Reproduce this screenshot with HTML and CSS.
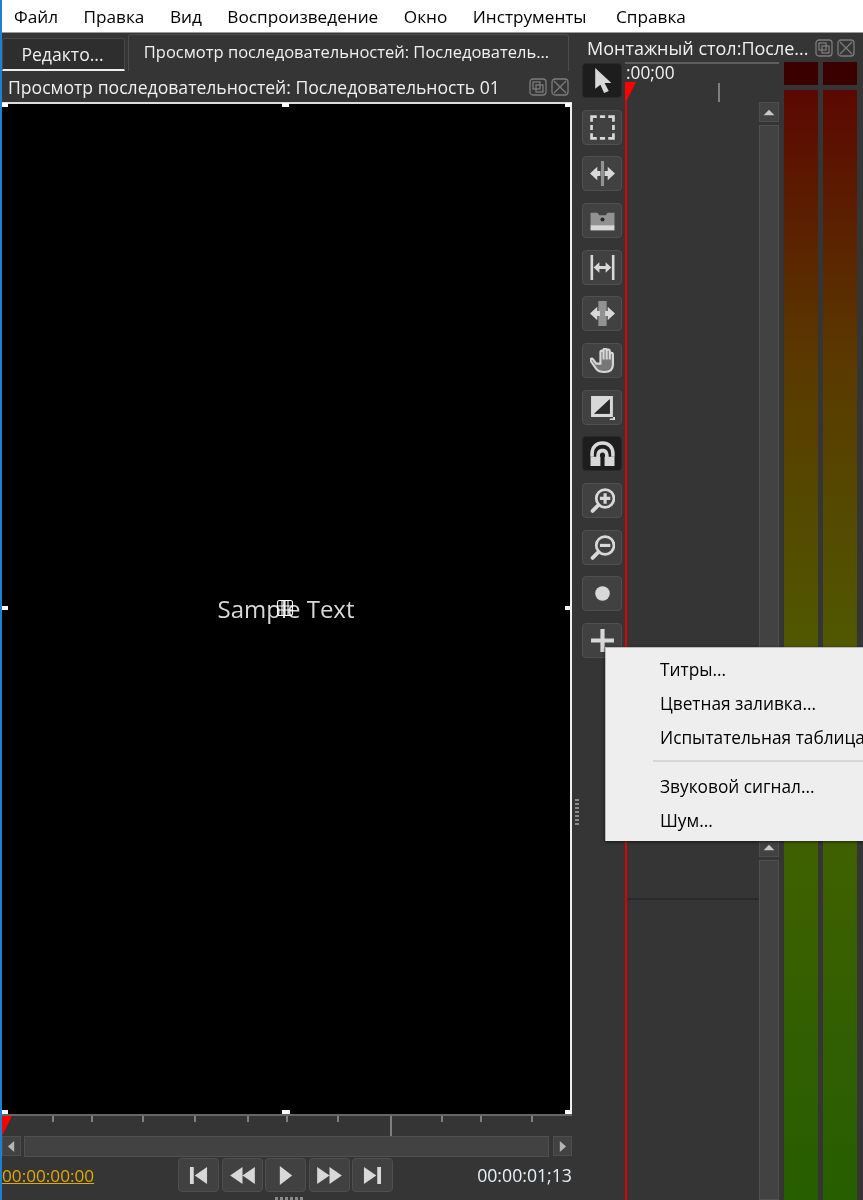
FILE: index.html
```html
<!DOCTYPE html>
<html>
	<head>
		<title>Olive</title>
		<link rel="stylesheet" href="styles.css">
	</head>
	<body>
		<div class="app">
			<div class="menubar">
				<span>Файл</span>
				<span>Правка</span>
				<span>Вид</span>
				<span>Воспроизведение</span>
				<span>Окно</span>
				<span>Инструменты</span>
				<span>Справка</span>
			</div>
			<div class="workspace">
				<div class="left">
					<div class="tabs">
						<div class="tab">Редакто...</div>
						<div class="tab active">Просмотр последовательностей: Последователь...</div>
					</div>
					<div class="panel-title">
						<span class="title-text">Просмотр последовательностей: Последовательность 01</span>
						<svg class="dock" viewBox="0 0 18 18"><rect x="1" y="1" width="16" height="16" rx="3"/><rect x="4" y="4" width="7" height="7"/><rect x="7" y="7" width="7" height="7"/></svg>
						<svg class="dock" viewBox="0 0 18 18"><rect x="1" y="1" width="16" height="16" rx="3"/><path d="M3 3 15 15M15 3 3 15"/></svg>
					</div>
					<div class="viewer">
						<i class="handle h-tl"></i><i class="handle h-tc"></i><i class="handle h-tr"></i>
						<i class="handle h-ml"></i><i class="handle h-mr"></i>
						<i class="handle h-bl"></i><i class="handle h-bc"></i><i class="handle h-br"></i>
						<span class="sample">Sample Text</span>
						<svg class="anchor" viewBox="0 0 18 18"><rect x="1.5" y="1.5" width="15" height="15" rx="2"/><path d="M9 1V17M1 7H17M1 11H17M6 1V17M12 1V17"/></svg>
					</div>
					<div class="ruler">
						<svg class="ruler-ticks" viewBox="0 0 570 20">
							<path class="tick" d="M51 0V6M90 0V6M141 0V6M193 0V6M246 0V6M285 0V6M336 0V6M440 0V6M479 0V6M530 0V6"/>
							<path class="tick big" d="M389 0V20"/>
							<path class="playhead" d="M0 0H10L0 20Z"/>
						</svg>
					</div>
					<div class="hscroll">
						<div class="arrow-btn"><svg viewBox="0 0 10 14"><path d="M8 1V13L1 7Z"/></svg></div>
						<div class="hscroll-track"></div>
						<div class="arrow-btn"><svg viewBox="0 0 10 14"><path d="M2 1V13L9 7Z"/></svg></div>
					</div>
					<div class="controls">
						<span class="time current">00:00:00:00</span>
						<div class="transport">
							<button class="btn"><svg viewBox="0 0 24 20"><path d="M3 1H7V19H3ZM21 1V19L8 10Z"/></svg></button>
							<button class="btn"><svg viewBox="0 0 26 20"><path d="M13 1V19L0 10ZM26 1V19L13 10Z"/></svg></button>
							<button class="btn"><svg viewBox="0 0 24 20"><path d="M6 0V20L19 10Z"/></svg></button>
							<button class="btn"><svg viewBox="0 0 26 20"><path d="M0 1V19L13 10ZM13 1V19L26 10Z"/></svg></button>
							<button class="btn"><svg viewBox="0 0 24 20"><path d="M3 1V19L16 10ZM17 1H21V19H17Z"/></svg></button>
						</div>
						<span class="time">00:00:01;13</span>
					</div>
				</div>
				<div class="right">
					<div class="dock-title">
						<span class="title-text">Монтажный стол:После...</span>
						<svg class="dock" viewBox="0 0 18 18"><rect x="1" y="1" width="16" height="16" rx="3"/><rect x="4" y="4" width="7" height="7"/><rect x="7" y="7" width="7" height="7"/></svg>
						<svg class="dock" viewBox="0 0 18 18"><rect x="1" y="1" width="16" height="16" rx="3"/><path d="M3 3 15 15M15 3 3 15"/></svg>
					</div>
					<div class="dock-body">
						<div class="tools">
							<button class="btn selected"><svg viewBox="0 0 24 24"><path d="M5 0V20L10 16 13.500 24 18 22 14 14.500H20.500Z"/></svg></button>
							<button class="btn"><svg viewBox="0 0 24 24"><path class="line marquee" d="M1.500 6.500V1.500H6.500M9.500 1.500H14.500M17.500 1.500H22.500V6.500M22.500 9.500V14.500M22.500 17.500V22.500H17.500M14.500 22.500H9.500M6.500 22.500H1.500V17.500M1.500 14.500V9.500"/></svg></button>
							<button class="btn"><svg viewBox="0 0 24 24"><path class="dim" d="M10.500 0H13.500V24H10.500Z"/><path d="M0 12 7 5.500V9.500H10V14.500H7V18.500ZM24 12 17 5.500V9.500H14V14.500H17V18.500Z"/></svg></button>
							<button class="btn"><svg viewBox="0 0 24 24"><path class="dim" d="M0.500 4.500H7L9 7H15L17 4.500H23.500V16.500H0.500Z"/><circle class="solid-dark" cx="12" cy="11" r="2"/><path d="M0.500 16.500H23.500V21.500H0.500Z"/></svg></button>
							<button class="btn"><svg viewBox="0 0 24 24"><path d="M0.500 0H3V24H0.500ZM21 0H23.500V24H21ZM9 7V10.500H15V7L20.500 12 15 17V13.500H9V17L3.500 12Z"/></svg></button>
							<button class="btn"><svg viewBox="0 0 24 24"><path class="dim" d="M8 0H16V24H8Z"/><path d="M0 12 7 5.500V9.500H9.500V14.500H7V18.500ZM24 12 17 5.500V9.500H14.500V14.500H17V18.500Z"/></svg></button>
							<button class="btn"><svg viewBox="0 0 24 24"><path class="line hand" d="M6 15 3 11C1 9 0 11 1 13L6 20C8 23 11 23 14 23 19 23 22 21 22 16V6C22 4 19 4 19 6V11 3C19 1 16 1 16 3V11 2C16 0 13 0 13 2V11 4C13 2 10 2 10 4V15Z"/></svg></button>
							<button class="btn"><svg viewBox="0 0 24 24"><path d="M1 1H22V21H1ZM4 18H19V4Z"/><path class="solid-dark" d="M4 18H19V4Z"/><path d="M22 21H24V24H19V22.500H22Z"/></svg></button>
							<button class="btn selected"><svg viewBox="0 0 24 24"><path class="line magnet" d="M2 15V12C2 5.500 6.500 2 12 2 17.500 2 22 5.500 22 12V15"/><path d="M0.500 15H10V24H0.500ZM14 15H23.500V24H14ZM6 15C6 9 9 7.500 12 7.500 15 7.500 18 9 18 15H14.500C14.500 12 14 11 12 11 10 11 9.500 12 9.500 15Z"/></svg></button>
							<button class="btn"><svg viewBox="0 0 24 24"><circle class="line lens" cx="14.500" cy="10" r="8.500"/><path class="line grip" d="M8 16.500 2.500 22"/><path d="M13 5H16V8.500H19.500V11.500H16V15H13V11.500H9.500V8.500H13Z"/></svg></button>
							<button class="btn"><svg viewBox="0 0 24 24"><circle class="line lens" cx="14.500" cy="10" r="8.500"/><path class="line grip" d="M8 16.500 2.500 22"/><path d="M9.500 8.500H19.500V11.500H9.500Z"/></svg></button>
							<button class="btn"><svg viewBox="0 0 24 24"><circle cx="12" cy="12" r="7"/></svg></button>
							<button class="btn"><svg viewBox="0 0 24 24"><path d="M10 1H14V10H23V14H14V23H10V14H1V10H10Z"/></svg></button>
						</div>
						<div class="timeline">
							<div class="tl-main">
								<div class="tl-tracks top">
									<span class="tl-time">:00;00</span>
									<svg class="tl-mark" viewBox="0 0 96 21"><path class="playhead" d="M0 0H11L2 18H0Z"/><path class="tick big" d="M94 1V20"/></svg>
								</div>
								<div class="tl-tracks bottom"></div>
							</div>
							<div class="vscrolls">
								<div class="vscroll first">
									<div class="arrow-btn up"><svg viewBox="0 0 14 10"><path d="M1 8H13L7 2Z"/></svg></div>
									<div class="vscroll-track"></div>
								</div>
								<div class="vscroll">
									<div class="arrow-btn up"><svg viewBox="0 0 14 10"><path d="M1 8H13L7 2Z"/></svg></div>
									<div class="vscroll-track"></div>
								</div>
							</div>
						</div>
						<div class="meter"><div class="cap"></div><div class="bar"></div></div>
						<div class="meter"><div class="cap"></div><div class="bar"></div></div>
					</div>
				</div>
			</div>
		</div>
		<div class="dots side"></div>
		<div class="dots under"></div>
		<div class="context-menu">
			<div class="item">Титры...</div>
			<div class="item">Цветная заливка...</div>
			<div class="item">Испытательная таблица</div>
			<div class="separator"></div>
			<div class="item">Звуковой сигнал...</div>
			<div class="item">Шум...</div>
		</div>
	</body>
</html>
```

FILE: styles.css
```css
html, body { margin: 0; padding: 0; }
body { position: relative; width: 863px; height: 1200px; overflow: hidden; font-family: "Open Sans", "Noto Sans", sans-serif; font-size: 17.3px; color: #f0f0f0; background: #353535; }
svg { display: block; }

.app { display: flex; flex-direction: column; height: 1200px; border-left: 2px solid #1f7fd0; box-sizing: border-box; filter: blur(.3px); }

.menubar { display: flex; gap: 25.5px; height: 32px; padding-left: 12px; align-items: center; background: #fff; color: #000; border-bottom: 1px solid #9a9a9a; font-size: 17.2px; }
.menubar span:last-child { margin-left: 4px; }

.workspace { display: flex; flex: 1; min-height: 0; }
.left { display: flex; flex-direction: column; width: 570px; flex: none; }

.tabs { display: flex; align-items: flex-end; gap: 3px; height: 38px; box-sizing: border-box; }
.tab { width: 123px; height: 33px; line-height: 31px; padding-right: 2px; text-align: center; font-size: 17.6px; background: #2e2e2e; border: 1px solid #484848; border-bottom: 2px solid #eee; border-radius: 3px 3px 0 0; box-sizing: border-box; }
.tab.active { width: 441px; height: 37px; line-height: 33px; padding-right: 4px; font-size: 16.5px; background: #353535; border-color: #4c4c4c; border-bottom: none; }

.panel-title { display: flex; align-items: center; height: 31px; padding: 0 3px 0 6px; box-sizing: border-box; font-size: 17.6px; }
.title-text { flex: 1; white-space: nowrap; }
.dock { width: 18px; height: 18px; margin-left: 4px; flex: none; fill: none; stroke: #7c7c7c; stroke-width: 1.3; }

.viewer { position: relative; height: 1012px; flex: none; background: #000; border-top: 2px solid #ddd; border-right: 2px solid #eee; box-sizing: border-box; display: flex; align-items: center; justify-content: center; }
.sample { color: #d8d8d8; font-size: 24px; position: relative; top: -1px; }
.anchor { position: absolute; left: 274px; top: 495px; width: 18px; height: 18px; fill: none; stroke: #fff; stroke-width: 1.1; }
.handle { position: absolute; width: 6px; height: 4px; background: #fff; }
.h-tl { left: 0; top: -1px; }
.h-tc { left: 280px; top: -1px; width: 7px; }
.h-tr { right: -1px; top: -1px; }
.h-ml { left: 0; top: 502px; }
.h-mr { right: -1px; top: 502px; }
.h-bl { left: 0; bottom: 0; }
.h-bc { left: 280px; bottom: 0; width: 8px; }
.h-br { right: -1px; bottom: 0; }

.ruler { height: 22px; flex: none; border-top: 2px solid #666; box-sizing: border-box; }
.ruler-ticks { width: 570px; height: 20px; }
.tick { fill: none; stroke: #999; stroke-width: 1.5; }
.playhead { fill: #f00; }

.hscroll { display: flex; gap: 3px; height: 21px; flex: none; }
.arrow-btn { display: flex; align-items: center; justify-content: center; width: 19px; height: 20px; flex: none; background: #424242; border: 1px solid #4e4e4e; box-sizing: border-box; }
.arrow-btn svg { width: 9px; height: 13px; fill: #b5b5b5; }
.arrow-btn.up { width: 20px; height: 20px; }
.arrow-btn.up svg { width: 14px; height: 9px; fill: #c8c8c8; }
.hscroll-track { flex: 1; background: #424242; border: 1px solid #505050; margin-right: 1px; }

.controls { display: flex; align-items: center; justify-content: space-between; height: 36px; flex: none; }
.time { width: 95px; font-size: 17.7px; text-align: right; color: #e8f0f8; white-space: nowrap; }
.time.current { text-align: left; font-size: 17.2px; color: #e0a800; text-decoration: underline; }
.transport { display: flex; gap: 2.5px; margin-right: 3px; }

.btn { display: flex; align-items: center; justify-content: center; padding: 0; width: 41px; height: 34px; background: #414141; border: 1px solid #4f4f4f; border-radius: 4px; }
.btn svg { height: 18px; fill: #d8d8d8; }
.transport .btn svg { width: 25px; height: 19px; }
.btn.selected { background: #1d1d1d; border-color: #2a2a2a; }

.right { display: flex; flex-direction: column; flex: 1; min-width: 0; }
.dock-title { display: flex; align-items: center; height: 29px; padding: 0 8px 0 15px; box-sizing: border-box; font-size: 18px; }
.dock-body { display: flex; flex: 1; min-height: 0; }

.tools { display: flex; flex-direction: column; gap: 11.67px; width: 40px; margin: 1px 3px 0 10px; flex: none; }
.tools .btn { width: 40px; height: 35px; }
.tools .btn svg { width: 25px; height: 25px; }
.line { fill: none; stroke: #d8d8d8; stroke-width: 2; }
.marquee { stroke-width: 2.6; }
.hand { fill: #777; }
.magnet { stroke-width: 3.4; }
.lens { stroke-width: 2.6; }
.grip { stroke-width: 3.6; stroke-linecap: round; }
.dim { fill: #929292; }
.solid-dark { fill: #2a2a2a; }

.timeline { display: flex; width: 154px; flex: none; border-top: 2px solid #5e5e5e; box-sizing: border-box; }
.tl-main { display: flex; flex-direction: column; width: 134px; flex: none; }
.tl-tracks { position: relative; box-sizing: border-box; border-left: 2px solid #e00000; }
.tl-tracks.top { height: 836px; border-left: none; border-bottom: 2px solid #2a2a2a; }
.tl-tracks.top::before { content: ""; position: absolute; left: 0; top: 20px; bottom: -2px; width: 2px; background: #e00000; }
.tl-tracks.bottom { flex: 1; }
.tl-time { position: absolute; left: 1px; top: -2px; line-height: 22px; }
.tl-mark { position: absolute; left: 0; top: 18px; width: 96px; height: 21px; }

.vscrolls { display: flex; flex-direction: column; width: 20px; flex: none; }
.vscroll { display: flex; flex-direction: column; gap: 3px; flex: 1; }
.vscroll.first { flex: none; height: 773px; padding-top: 38px; box-sizing: border-box; }
.vscroll-track { flex: 1; background: #424242; border: 1px solid #505050; }

.meter { display: flex; flex-direction: column; gap: 5px; width: 34px; margin-left: 5px; flex: none; }
.cap { height: 23px; background: #3a0000; }
.bar { flex: 1; background: linear-gradient(#5c0800, #5a3a00 25%, #4f5a00 52%, #3c6000 72%, #265e00); }

.context-menu { position: absolute; left: 605px; top: 647px; width: 258px; height: 194px; padding-top: 5px; box-sizing: border-box; background: #eee; color: #000; border-top: 1px solid #bbb; border-left: 1px solid #bbb; box-shadow: 0 1px 3px rgba(0, 0, 0, .6); filter: blur(.3px); }
.item { height: 34px; line-height: 34px; padding-left: 54px; white-space: nowrap; }
.separator { height: 2px; margin: 5px 0 8px 47px; background: #d6d6d6; }

.dots { position: absolute; }
.dots.side { left: 575px; top: 799px; width: 4px; height: 26px; background: repeating-linear-gradient(#8a8a8a 0 2px, transparent 2px 4px); }
.dots.under { left: 275px; top: 1197px; width: 28px; height: 3px; background: repeating-linear-gradient(90deg, #8a8a8a 0 3px, transparent 3px 5px); }
```
